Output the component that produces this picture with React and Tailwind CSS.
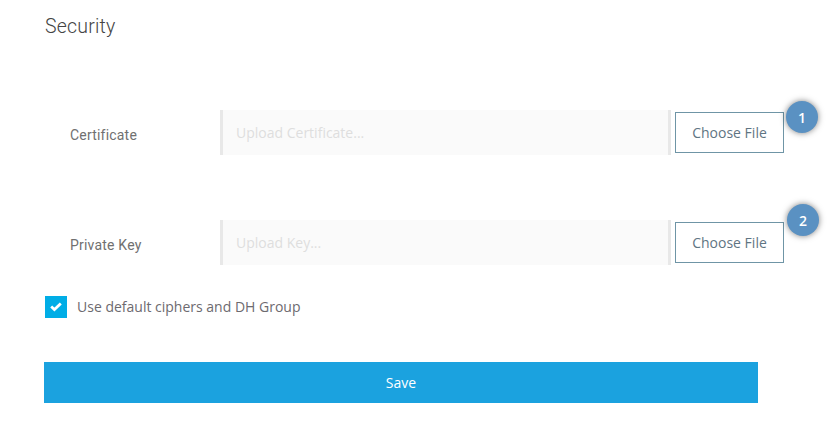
import React from 'react';

const FileRow = ({ label, placeholder, badge, badgeClass, className }) => (
  <div className={`flex items-start ${className}`}>
    <label className="w-[176px] pl-[26px] mt-[15px] text-[14px] leading-[20px] tracking-[0.2px] text-[#707070] font-['Roboto',sans-serif]">
      {label}
    </label>
    <div className="w-[451px] h-[45px] bg-[#fafafa] border-l-[3px] border-r-[3px] border-[#e8e8e8] pl-[13px] text-[14px] leading-[46px] text-[#dedede] font-['Open_Sans',sans-serif]">
      {placeholder}
    </div>
    <div className="relative ml-[4px] mt-[2px]">
      <button
        type="button"
        className="block w-[109px] h-[41px] bg-white border border-[#6f95a6] text-[14px] text-[#5f7583] font-['Open_Sans',sans-serif]"
      >
        Choose File
      </button>
      <span className={`absolute w-[32px] h-[32px] rounded-full bg-[#5a91c2] shadow-[0_0_6px_rgba(0,0,0,0.5)] flex items-center justify-center text-white text-[14px] font-semibold font-['Open_Sans',sans-serif] ${badgeClass}`}>
        {badge}
      </span>
    </div>
  </div>
);

const App = () => {
  return (
    <div className="w-[839px] h-[424px] bg-white overflow-hidden pl-[44px]">
      <h2 className="pt-[14px] pl-[1px] text-[19.5px] leading-[26px] font-light tracking-[0.2px] text-[#444444] font-['Roboto',sans-serif]">
        Security
      </h2>

      <FileRow
        label="Certificate"
        placeholder="Upload Certificate..."
        badge="1"
        badgeClass="left-[111px] top-[-11px]"
        className="mt-[70px]"
      />
      <FileRow
        label="Private Key"
        placeholder="Upload Key..."
        badge="2"
        badgeClass="left-[112px] top-[-18px]"
        className="mt-[65px]"
      />

      <div className="flex items-center mt-[31px] ml-[1px]">
        <span className="w-[22px] h-[22px] bg-[#00ade6] flex items-center justify-center">
          <svg width="12" height="10" viewBox="0 0 12 10" fill="none">
            <path d="M1.2 4.6l3.2 3 6.4-6" stroke="white" strokeWidth="2.8" />
          </svg>
        </span>
        <span className="ml-[10px] text-[14px] leading-[22px] text-[#6d6a6f] font-['Open_Sans',sans-serif]">
          Use default ciphers and DH Group
        </span>
      </div>

      <button
        type="button"
        className="block mt-[44px] w-[714px] h-[41px] bg-[#1ba2df] text-white text-[14px] font-['Open_Sans',sans-serif]"
      >
        Save
      </button>
    </div>
  );
};

export default App;
